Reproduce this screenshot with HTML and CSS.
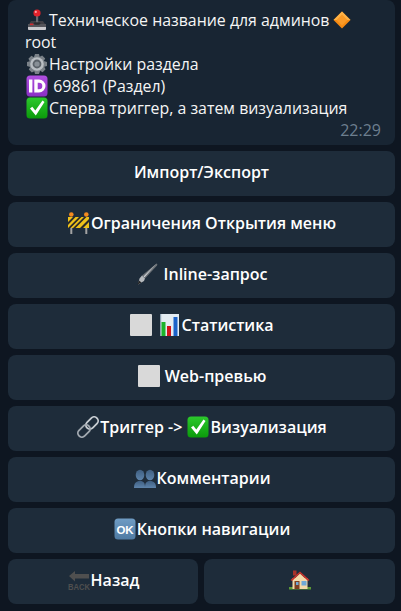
FILE: index.html
```html
<!DOCTYPE html>
<html lang="ru">
<head>
<meta charset="utf-8">
<title>Настройки раздела</title>
<link rel="stylesheet" href="styles.css">
</head>
<body>
<svg class="defs" width="0" height="0" aria-hidden="true">
<defs>
<linearGradient id="g-green" x1="0" y1="0" x2="0" y2="1"><stop offset="0" stop-color="#2cc92c"/><stop offset="1" stop-color="#0b9a0b"/></linearGradient>
<linearGradient id="g-purple" x1="0" y1="0" x2="0" y2="1"><stop offset="0" stop-color="#b04fe0"/><stop offset="1" stop-color="#8a2fc4"/></linearGradient>
<linearGradient id="g-blue" x1="0" y1="0" x2="0" y2="1"><stop offset="0" stop-color="#6f9cc4"/><stop offset="1" stop-color="#4f7ba3"/></linearGradient>
<linearGradient id="g-people" x1="0" y1="0" x2="0" y2="1"><stop offset="0" stop-color="#3f5f82"/><stop offset="1" stop-color="#5d83aa"/></linearGradient>
<symbol id="i-joy" viewBox="0 0 22 22"><path d="M3 15l2-3h12l2 3z" fill="#3f3f45"/><path d="M2 15h18v5a1 1 0 0 1-1 1H3a1 1 0 0 1-1-1z" fill="#55555b"/><path d="M2 18h18v2a1 1 0 0 1-1 1H3a1 1 0 0 1-1-1z" fill="#c9c9cd"/><rect x="10" y="6" width="2.200" height="8" fill="#6a6a70"/><ellipse cx="11" cy="14.500" rx="3.500" ry="1.300" fill="#2a2a2e"/><circle cx="11" cy="4" r="3.600" fill="#e3222b"/><circle cx="9.800" cy="2.900" r="1.100" fill="#ff9da0"/><rect x="4" y="14.500" width="3.400" height="1.600" fill="#d22a30"/></symbol>
<symbol id="i-dia" viewBox="0 0 22 22"><path d="M11 2.500l8.500 8.500-8.500 8.500L2.500 11z" fill="#f58a12"/><path d="M11 2.500l8.500 8.500H2.500z" fill="#ffb347"/><path d="M11 5.500L16.500 11 11 16.500 5.500 11z" fill="#fb9a26"/></symbol>
<symbol id="i-gear" viewBox="0 0 22 22"><path d="M9 1h4l.7 2.800 2.500-1.400 3 3-1.400 2.500L21 9v4l-2.800.7 1.400 2.500-3 3-2.500-1.400L13 21H9l-.7-2.800-2.500 1.400-3-3 1.400-2.500L1 13V9l2.800-.7-1.400-2.500 3-3 2.500 1.400z" fill="#7a8188"/><circle cx="11" cy="11" r="6.800" fill="#b9bec3"/><circle cx="11" cy="11" r="4.400" fill="#5a6168"/><circle cx="11" cy="11" r="2.600" fill="#888f96"/></symbol>
<symbol id="i-id" viewBox="0 0 22 22"><rect x="0.500" y="0.500" width="21" height="21" rx="3.500" fill="url(#g-purple)"/><rect x="3" y="4.500" width="3.400" height="13" fill="#fff"/><path d="M8.300 4.500h4.700a6.500 6.500 0 0 1 0 13H8.300zM11.700 7.700v6.600H13a3.300 3.300 0 0 0 0-6.600z" fill="#fff" fill-rule="evenodd"/></symbol>
<symbol id="i-check" viewBox="0 0 22 22"><rect x="0.500" y="0.500" width="21" height="21" rx="3.500" fill="url(#g-green)"/><path d="M4 11.500l2.300-1.800 3 3.800L16.500 3.500l2 1.500L9.800 18.500z" fill="#fff"/></symbol>
<symbol id="i-road" viewBox="0 0 22 22"><rect x="2.300" y="6" width="2" height="16" fill="#a3a3a3"/><rect x="17.300" y="6" width="2" height="16" fill="#a3a3a3"/><circle cx="3.300" cy="2.500" r="2.300" fill="#f58a1f"/><circle cx="18.300" cy="2.500" r="2.300" fill="#f58a1f"/><rect x="0" y="5" width="21" height="11" fill="#eec21a"/><path d="M0 10l5-5h2.500L0 13zM5 16l11-11h2.500l-11 11zM12 16l9-9v3l-6 6zM0 16l11-11h2.500L2.500 16z" fill="#2a2a2a"/></symbol>
<symbol id="i-brush" viewBox="0 0 22 22"><path d="M20.500 .5c1 .5 1 1 .5 2L9 15.500 6 12.500z" fill="#6e7378"/><path d="M20.500 .5L7.500 13.500l1 .8z" fill="#d0d4d8"/><path d="M6 12.500l3 3-1 2.500-6 3.500 1.500-6z" fill="#b5b9bd"/><path d="M1.500 21.500l1.500-4 2.500 2z" fill="#222"/></symbol>
<symbol id="i-box" viewBox="0 0 22 22"><rect width="22" height="22" rx="1" fill="#d9d9d9"/></symbol>
<symbol id="i-chart" viewBox="0 0 22 22"><rect x="1" width="19" height="22" fill="#e4ecf2"/><rect x="1" width="1.200" height="22" fill="#8fa3b3"/><rect x="2.500" y="8" width="4" height="14" fill="#1cb32a"/><rect x="8" y="12" width="4" height="10" fill="#d3121b"/><rect x="14.500" y="3" width="4" height="19" fill="#1b62c9"/></symbol>
<symbol id="i-link" viewBox="0 0 22 22"><g fill="none" stroke-width="1.800"><rect x="-7" y="-4" width="14" height="8" rx="4" transform="translate(15 7) rotate(-45)" stroke="#c9ced3"/><rect x="-7" y="-4" width="14" height="8" rx="4" transform="translate(7 15) rotate(-45)" stroke="#a2a9b0"/></g></symbol>
<symbol id="i-people" viewBox="0 0 22 22"><g fill="url(#g-people)"><ellipse cx="6" cy="8" rx="4.300" ry="5.300"/><ellipse cx="16" cy="8" rx="4.300" ry="5.300"/><path d="M0 21c0-5 2-7 6-7s5 2 5 7z"/><path d="M11 21c0-5 1-7 5-7s6 2 6 7z"/></g></symbol>
<symbol id="i-ok" viewBox="0 0 22 22"><rect x="0.500" y="0.500" width="21" height="21" rx="3.500" fill="url(#g-blue)"/><text class="ok" x="11" y="15.500" text-anchor="middle">OK</text></symbol>
<symbol id="i-back" viewBox="0 0 22 22"><path d="M1 7l6-5v3h14v4.500H7v3z" fill="#4f4f4f"/><text class="bk" x="0" y="21" textLength="22" lengthAdjust="spacingAndGlyphs">BACK</text></symbol>
<symbol id="i-home" viewBox="0 0 22 22"><rect x="0" y="18" width="22" height="2.500" fill="#5c9a36"/><rect x="3.500" y="9" width="15" height="11" fill="#f3d9a8"/><rect x="4" y="1.500" width="3.500" height="5" fill="#a8322a"/><path d="M11 4.500L3 12h16z" fill="#f3d9a8"/><path d="M11 2.500L1.500 11 3 12l8-7.500 8 7.500 1.500-1z" fill="#c8342c"/><rect x="5.500" y="12" width="5" height="8" fill="#7c3f22"/><rect x="7" y="13" width="2.500" height="3" fill="#6fa9d6"/><rect x="12.500" y="12" width="5" height="4.500" fill="#6fa9d6"/></symbol>
</defs>
</svg>
<main class="chat">
  <section class="bubble">
    <p class="line"><svg class="emo"><use href="#i-joy"/></svg>Техническое название для админов<svg class="emo"><use href="#i-dia"/></svg></p>
    <p class="line">root</p>
    <p class="line"><svg class="emo"><use href="#i-gear"/></svg>Настройки раздела</p>
    <p class="line"><svg class="emo"><use href="#i-id"/></svg> 69861 (Раздел)</p>
    <p class="line"><svg class="emo"><use href="#i-check"/></svg>Сперва триггер, а затем визуализация</p>
    <div class="time">22:29</div>
  </section>
  <nav class="keys">
    <button class="key">Импорт/Экспорт</button>
    <button class="key"><svg class="emo"><use href="#i-road"/></svg>Ограничения Открытия меню</button>
    <button class="key"><svg class="emo"><use href="#i-brush"/></svg> Inline-запрос</button>
    <button class="key"><svg class="emo"><use href="#i-box"/></svg> <svg class="emo"><use href="#i-chart"/></svg>Статистика</button>
    <button class="key"><svg class="emo"><use href="#i-box"/></svg> Web-превью</button>
    <button class="key"><svg class="emo"><use href="#i-link"/></svg>Триггер -&gt; <svg class="emo"><use href="#i-check"/></svg>Визуализация</button>
    <button class="key"><svg class="emo"><use href="#i-people"/></svg>Комментарии</button>
    <button class="key"><svg class="emo"><use href="#i-ok"/></svg>Кнопки навигации</button>
    <div class="pair">
      <button class="key"><svg class="emo"><use href="#i-back"/></svg>Назад</button>
      <button class="key"><svg class="emo"><use href="#i-home"/></svg></button>
    </div>
  </nav>
</main>
</body>
</html>
```
FILE: styles.css
```css
* { box-sizing: border-box; }
html, body { height: 100%; }
body {
  margin: 0;
  background: #0e1621;
  color: #f5f5f5;
  font-family: "Open Sans", sans-serif;
  font-size: 15.900px;
  overflow: hidden;
}
.defs { position: absolute; }
.chat {
  display: flex;
  flex-direction: column;
  gap: 6px;
  padding: 0 6px 0 8px;
}
.bubble {
  background: #182533;
  border-radius: 8px;
  padding: 9px 14px 0 17px;
  height: 145px;
}
.line {
  margin: 0;
  height: 22px;
  line-height: 22px;
  white-space: nowrap;
}
.time {
  text-align: right;
  color: #6d7f8f;
  font-size: 16px;
  line-height: 22px;
}
.emo {
  width: 22px;
  height: 22px;
  margin: 0 1px;
  vertical-align: -5px;
}
.keys {
  display: flex;
  flex-direction: column;
  gap: 6px;
}
.key {
  height: 45px;
  width: 100%;
  border: 0;
  border-radius: 8px;
  background: #1e2c3a;
  color: #fff;
  font: 600 16px "Open Sans", sans-serif;
  padding: 0 0 3px;
  white-space: nowrap;
}
.pair {
  display: grid;
  grid-template-columns: 190px 1fr;
  gap: 6px;
}
.ok { font: 700 11.500px "Liberation Sans", sans-serif; fill: #fff; }
.bk { font: 700 8.500px "Liberation Sans", sans-serif; fill: #4f4f4f; }
```
